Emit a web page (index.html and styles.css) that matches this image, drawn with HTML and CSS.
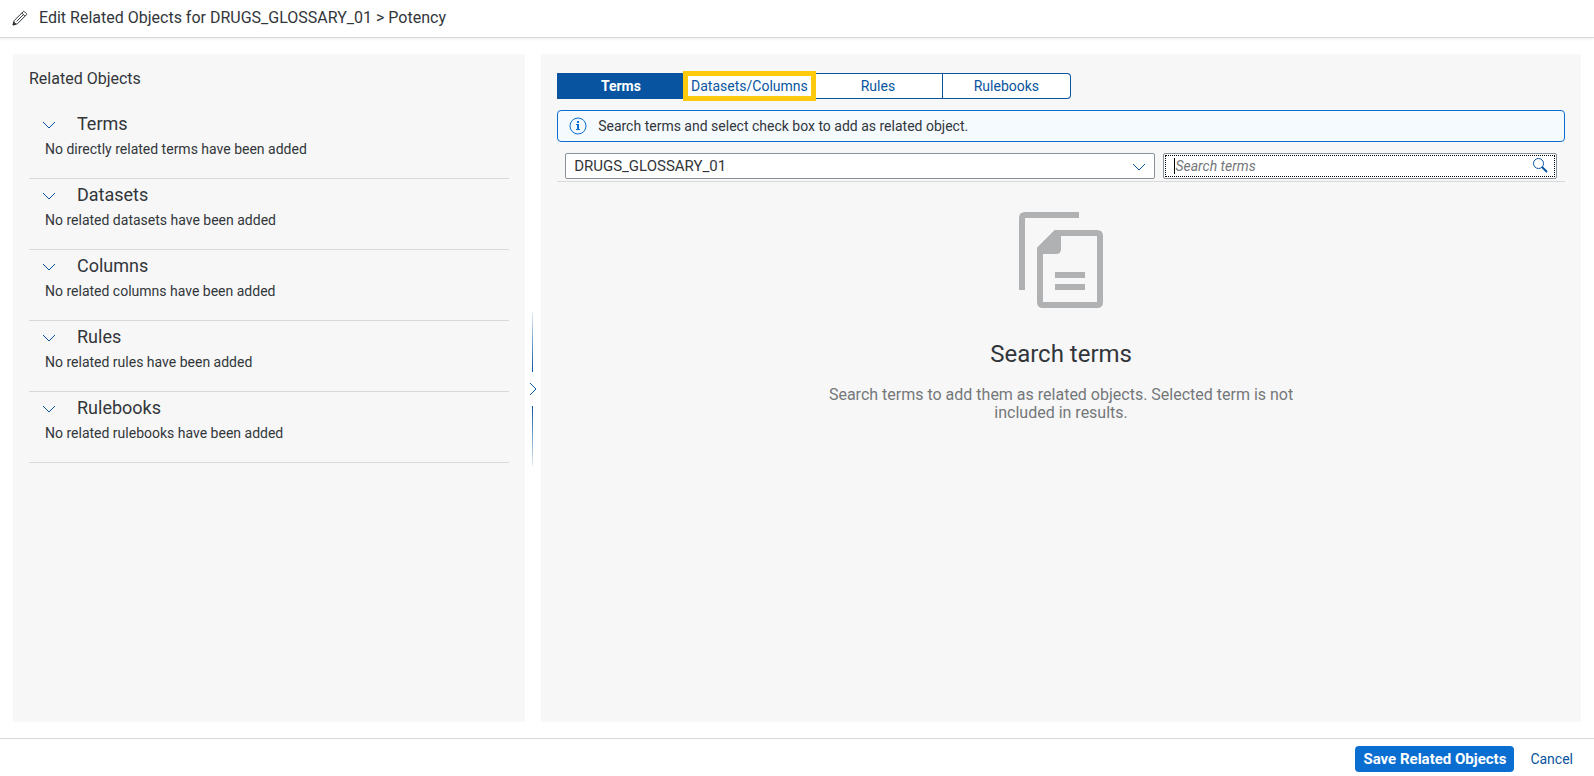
FILE: index.html
```html
<!DOCTYPE html>
<html lang="en">
<head>
<meta charset="utf-8">
<title>Edit Related Objects</title>
<link rel="stylesheet" href="styles.css">
</head>
<body>
<header class="header">
  <svg class="header-icon" width="16" height="16" viewBox="0 0 16 16" fill="none" stroke="currentColor" stroke-linejoin="round" aria-hidden="true">
    <path d="M1 15 2.2 10.6 11.2 1.6Q11.8 1 12.4 1.6L14.4 3.6Q15 4.2 14.4 4.8L5.4 13.8ZM9.8 3 13 6.2M11.4 4.6 4.6 11.4"/>
    <path d="M1 15 1.8 12 4 14.2Z" fill="currentColor"/>
  </svg>
  <h1 class="header-title">Edit Related Objects for DRUGS_GLOSSARY_01 &gt; Potency</h1>
</header>
<main class="workspace">
  <aside class="related">
    <h2 class="related-title">Related Objects</h2>
    <section class="group">
      <button class="group-toggle" type="button" aria-expanded="true"><svg class="chevron" width="14" height="8" viewBox="0 0 14 8" aria-hidden="true"><path d="M1 1 7 7 13 1"/></svg><span>Terms</span></button>
      <p class="group-text">No directly related terms have been added</p>
    </section>
    <section class="group">
      <button class="group-toggle" type="button" aria-expanded="true"><svg class="chevron" width="14" height="8" viewBox="0 0 14 8" aria-hidden="true"><path d="M1 1 7 7 13 1"/></svg><span>Datasets</span></button>
      <p class="group-text">No related datasets have been added</p>
    </section>
    <section class="group">
      <button class="group-toggle" type="button" aria-expanded="true"><svg class="chevron" width="14" height="8" viewBox="0 0 14 8" aria-hidden="true"><path d="M1 1 7 7 13 1"/></svg><span>Columns</span></button>
      <p class="group-text">No related columns have been added</p>
    </section>
    <section class="group">
      <button class="group-toggle" type="button" aria-expanded="true"><svg class="chevron" width="14" height="8" viewBox="0 0 14 8" aria-hidden="true"><path d="M1 1 7 7 13 1"/></svg><span>Rules</span></button>
      <p class="group-text">No related rules have been added</p>
    </section>
    <section class="group">
      <button class="group-toggle" type="button" aria-expanded="true"><svg class="chevron" width="14" height="8" viewBox="0 0 14 8" aria-hidden="true"><path d="M1 1 7 7 13 1"/></svg><span>Rulebooks</span></button>
      <p class="group-text">No related rulebooks have been added</p>
    </section>
  </aside>
  <div class="splitter">
    <span class="splitter-line"></span>
    <button class="splitter-button" type="button" aria-label="Resize panels"><svg class="chevron" width="8" height="14" viewBox="0 0 8 14" aria-hidden="true"><path d="M1 1 7 7 1 13"/></svg></button>
    <span class="splitter-line splitter-line-end"></span>
  </div>
  <section class="finder">
    <div class="tabs">
      <button class="tab tab-selected" type="button">Terms</button>
      <button class="tab tab-marked" type="button">Datasets/Columns</button>
      <button class="tab" type="button">Rules</button>
      <button class="tab" type="button">Rulebooks</button>
    </div>
    <div class="notice" role="status">
      <svg width="18" height="18" viewBox="0 0 18 18" aria-hidden="true"><circle cx="9" cy="9" r="8" fill="none" stroke="currentColor"/><path fill="currentColor" d="M8 4h2v2H8zM7 7h3v5h1v1H7v-1h1V8H7z"/></svg>
      <span>Search terms and select check box to add as related object.</span>
    </div>
    <div class="filters">
      <div class="field">
        <select class="control control-select" aria-label="Glossary"><option>DRUGS_GLOSSARY_01</option></select>
        <svg class="chevron field-icon" width="14" height="8" viewBox="0 0 14 8" aria-hidden="true"><path d="M1 1 7 7 13 1"/></svg>
      </div>
      <div class="field field-search">
        <input class="control control-search" type="text" placeholder="Search terms" aria-label="Search terms">
        <span class="caret"></span>
        <button class="search-button" type="button" aria-label="Search"><svg width="16" height="16" viewBox="0 0 16 16" fill="none" stroke="currentColor" aria-hidden="true"><circle cx="6.5" cy="6.5" r="5"/><path stroke-width="2" d="M10 10 15 15"/></svg></button>
      </div>
    </div>
    <div class="empty">
      <svg width="84" height="96" viewBox="0 0 84 96" aria-hidden="true"><g fill="none" stroke="#b0b1b2" stroke-width="6"><path d="M3 78V6Q3 3 6 3H60"/><path d="M37 21H78Q81 21 81 24V90Q81 93 78 93H24Q21 93 21 90V37Z"/><path d="M36 63H66M36 75H66"/></g><path fill="#b0b1b2" d="M18 36 36 18H42V37Q42 42 37 42H18Z"/></svg>
      <h2 class="empty-title">Search terms</h2>
      <p class="empty-text">Search terms to add them as related objects. Selected term is not included in results.</p>
    </div>
  </section>
</main>
<footer class="footer">
  <button class="action action-primary" type="button">Save Related Objects</button>
  <button class="action" type="button">Cancel</button>
</footer>
</body>
</html>
```
FILE: styles.css
```css
* {
  box-sizing: border-box;
}

body {
  margin: 0;
  min-height: 100vh;
  display: flex;
  flex-direction: column;
  background: #fff;
  color: #32363a;
  font: 14px/18px Roboto, "Noto Sans", sans-serif;
}

h1, h2, p {
  margin: 0;
  font-weight: 400;
}

button {
  margin: 0;
  padding: 0;
  border: 0;
  background: none;
  color: #0854a0;
  font: inherit;
}

svg {
  display: block;
  flex: none;
}

.chevron {
  fill: none;
  stroke: #0854a0;
}

.header {
  display: flex;
  align-items: center;
  gap: 11px;
  padding: 7px 12px 8px;
  border-bottom: 1px solid #d9d9d9;
  box-shadow: 0 1px 3px rgba(0, 0, 0, .08);
}

.header-title,
.related-title {
  font-size: 16px;
  line-height: 22px;
}

.workspace {
  flex: 1;
  display: grid;
  grid-template-columns: 33fr 16px 67fr;
  padding: 16px 13px;
}

.related {
  padding: 14px 16px;
  background: #f7f7f7;
}

.related-title {
  margin-bottom: 18px;
}

.group {
  height: 71px;
  padding: 4px 16px 0;
  border-bottom: 1px solid #d9d9d9;
}

.group-toggle {
  display: flex;
  align-items: center;
  gap: 21px;
  height: 24px;
  margin-left: -3px;
  color: #32363a;
  font-size: 18px;
}

.group-toggle .chevron {
  margin-top: 2px;
}

.group-text {
  padding-top: 4px;
}

.splitter {
  display: flex;
  flex-direction: column;
  align-items: center;
  justify-content: center;
  padding: 2px 1px 0 0;
}

.splitter-line {
  width: 1px;
  height: 60px;
  background: linear-gradient(to top, #0854a0, #e6eef6);
}

.splitter-line-end {
  background: linear-gradient(#0854a0, #e6eef6);
}

.splitter-button {
  padding: 10px 3px;
}

.finder {
  padding: 19px 16px;
  background: #f7f7f7;
}

.tabs {
  display: grid;
  grid-template-columns: repeat(4, 1fr);
  width: 514px;
  height: 26px;
}

.tab {
  border: 1px solid #0854a0;
  border-left-width: 0;
  background: #fff;
}

.tab:last-child {
  border-radius: 0 4px 4px 0;
}

.tab-selected {
  background: #0854a0;
  color: #fff;
  font-weight: 700;
}

.tab-marked {
  position: relative;
  margin: -2px -2px -2px -3px;
  border: 5px solid #ffc90e;
}

.notice {
  display: flex;
  align-items: center;
  gap: 11px;
  margin: 11px 0;
  padding: 6px 11px;
  min-height: 32px;
  border: 1px solid #0a6ed1;
  border-radius: 4px;
  background: #f5faff;
}

.notice svg {
  color: #0a6ed1;
}

.filters {
  display: grid;
  grid-template-columns: 3fr 2fr;
  gap: 8px;
  padding: 0 8px 2px;
  border-bottom: 1px solid #d9d9d9;
}

.field {
  position: relative;
  height: 26px;
  border: 1px solid #89919a;
  border-radius: 2px;
  background: #fff;
}

.control {
  width: 100%;
  height: 100%;
  padding: 0 8px;
  border: 0;
  outline: 0;
  appearance: none;
  background: transparent;
  color: inherit;
  font: inherit;
}

.control-select {
  font-size: 15px;
}

.field-icon {
  position: absolute;
  right: 8px;
  top: 9px;
  pointer-events: none;
}

.field-search {
  outline: 1px dotted #000;
  outline-offset: -3px;
}

.control-search {
  padding: 0 40px 0 11px;
}

.control-search::placeholder {
  color: #74777a;
  font-style: italic;
  opacity: 1;
}

.caret {
  position: absolute;
  left: 10px;
  top: 4px;
  width: 1px;
  height: 16px;
  background: #000;
}

.search-button {
  position: absolute;
  right: 8px;
  top: 3px;
}

.empty {
  display: flex;
  flex-direction: column;
  align-items: center;
  padding-top: 30px;
  text-align: center;
}

.empty-title {
  margin: 31px 0 17px;
  font-size: 24px;
  line-height: 30px;
}

.empty-text {
  max-width: 480px;
  color: #74777a;
  font-size: 16px;
}

.footer {
  display: flex;
  justify-content: flex-end;
  gap: 8px;
  padding: 7px 13px 4px;
  border-top: 1px solid #d9d9d9;
}

.action {
  height: 26px;
  padding: 0 8px;
  border-radius: 4px;
}

.action-primary {
  background: #0a6ed1;
  color: #fff;
  font-size: 15px;
  font-weight: 700;
}
```
